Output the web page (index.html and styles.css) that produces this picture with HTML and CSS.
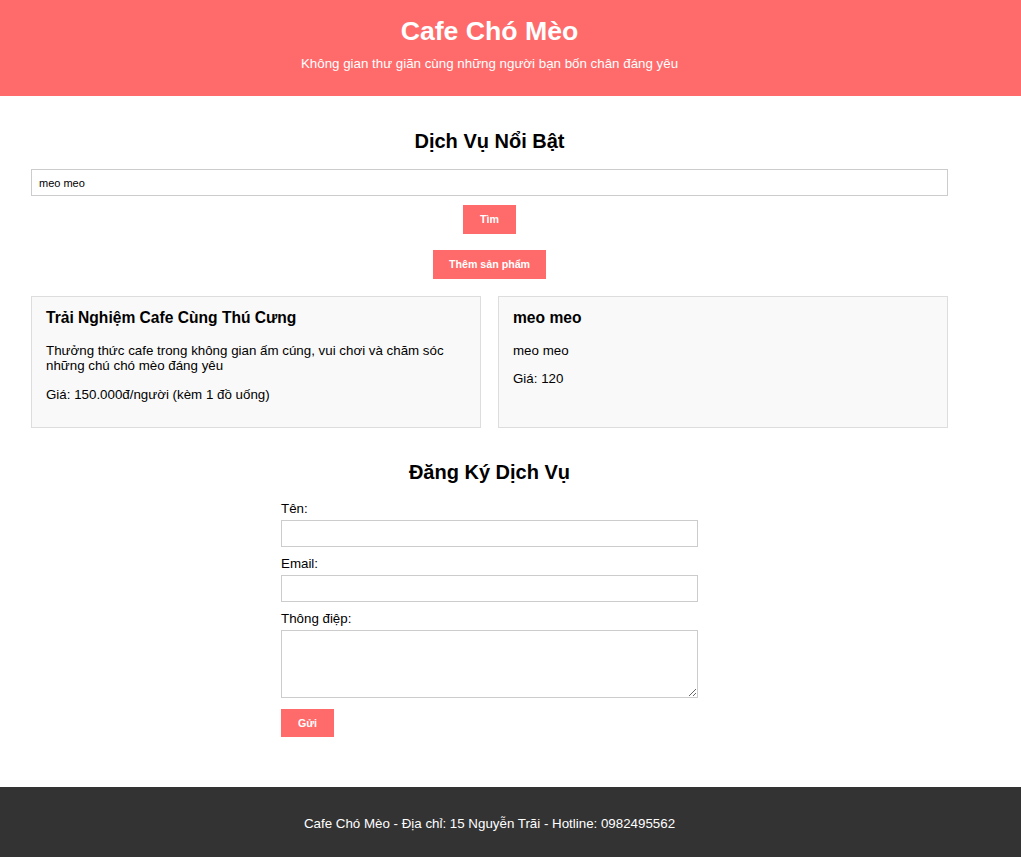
FILE: index.html
```html
<!DOCTYPE html>
<html lang="vi">
<head>
<meta charset="utf-8">
<title>Cafe Chó Mèo</title>
<link rel="stylesheet" href="styles.css">
</head>
<body>
<header class="site-header">
  <h1 class="site-title">Cafe Chó Mèo</h1>
  <p class="site-tagline">Không gian thư giãn cùng những người bạn bốn chân đáng yêu</p>
</header>
<main class="content">
  <section class="services">
    <h2 class="section-title">Dịch Vụ Nổi Bật</h2>
    <div class="search">
      <input class="search-input" type="text" value="meo meo">
      <button class="btn" type="button">Tìm</button>
      <button class="btn btn-add" type="button">Thêm sản phẩm</button>
    </div>
    <div class="cards">
      <div class="card">
        <h3 class="card-title">Trải Nghiệm Cafe Cùng Thú Cưng</h3>
        <p class="card-text">Thưởng thức cafe trong không gian ấm cúng, vui chơi và chăm sóc những chú chó mèo đáng yêu</p>
        <p class="card-text">Giá: 150.000đ/người (kèm 1 đồ uống)</p>
      </div>
      <div class="card">
        <h3 class="card-title">meo meo</h3>
        <p class="card-text">meo meo</p>
        <p class="card-text">Giá: 120</p>
      </div>
    </div>
  </section>
  <section class="register">
    <h2 class="section-title section-title-reg">Đăng Ký Dịch Vụ</h2>
    <form class="reg-form">
      <label class="field-label" for="name">Tên:</label>
      <input class="field-input" id="name" type="text">
      <label class="field-label" for="email">Email:</label>
      <input class="field-input" id="email" type="email">
      <label class="field-label" for="msg">Thông điệp:</label>
      <textarea class="field-area" id="msg"></textarea>
      <button class="btn btn-send" type="button">Gửi</button>
    </form>
  </section>
</main>
<footer class="site-footer">
  <p class="footer-text">Cafe Chó Mèo - Địa chỉ: 15 Nguyễn Trãi - Hotline: 0982495562</p>
</footer>
</body>
</html>
```
FILE: styles.css
```css
* { box-sizing: border-box; }
body {
  margin: 0;
  font-family: "Liberation Sans", Arial, sans-serif;
  font-size: 13.33px;
  color: #000;
  background: #fff;
}
.site-header {
  background: #ff6b6b;
  color: #fff;
  text-align: center;
  padding: 16px 42px 13px 0;
}
.site-title {
  margin: 0;
  font-size: 26.67px;
  line-height: 31px;
  font-weight: bold;
}
.site-tagline {
  margin: 9px 0 12px;
  font-size: 13.33px;
  line-height: 15px;
}
.content {
  width: 917px;
  margin-left: 31px;
  padding-bottom: 50px;
}
.services { padding-top: 34px; }
.section-title {
  margin: 0 0 16px;
  font-size: 20px;
  line-height: 23px;
  text-align: center;
  font-weight: bold;
}
.search {
  display: flex;
  flex-direction: column;
  align-items: center;
}
.search-input {
  width: 100%;
  height: 27px;
  border: 1px solid #ccc;
  padding: 0 7px;
  font-family: "Liberation Sans", Arial, sans-serif;
  font-size: 11px;
  color: #000;
  margin: 0 0 9px;
}
.btn {
  background: #ff6b6b;
  color: #fff;
  border: 0;
  font-family: "Liberation Sans", Arial, sans-serif;
  font-size: 10.67px;
  font-weight: bold;
  line-height: 13px;
  padding: 8px 17px;
  margin: 0;
  cursor: pointer;
}
.btn-add { margin-top: 16px; padding: 8px 16px; }
.cards {
  display: grid;
  grid-template-columns: 1fr 1fr;
  gap: 17px;
  margin-top: 17px;
}
.card {
  background: #f9f9f9;
  border: 1px solid #ddd;
  padding: 12px 14px 12px;
}
.card-title {
  margin: 0 0 16px;
  font-size: 15.6px;
  line-height: 18px;
  font-weight: bold;
}
.card-text {
  margin: 0 0 13px;
  line-height: 15.3px;
}
.register { padding-top: 33px; }
.section-title-reg { margin-bottom: 17px; }
.reg-form {
  width: 417px;
  margin: 0 auto;
  display: flex;
  flex-direction: column;
  align-items: flex-start;
}
.field-label {
  display: block;
  line-height: 15px;
  margin-bottom: 4px;
}
.field-input {
  display: block;
  width: 100%;
  height: 27px;
  border: 1px solid #ccc;
  padding: 0 7px;
  font-family: "Liberation Sans", Arial, sans-serif;
  font-size: 11px;
  margin: 0 0 9px;
}
.field-area {
  display: block;
  width: 100%;
  height: 68px;
  border: 1px solid #ccc;
  padding: 6px 7px;
  font-family: "Liberation Sans", Arial, sans-serif;
  font-size: 11px;
  margin: 0 0 11px;
}
.btn-send { padding: 8px 17px 7px; }
.site-footer {
  background: #333;
  color: #fff;
  text-align: center;
  padding: 29px 42px 26px 0;
}
.footer-text {
  margin: 0;
  line-height: 15px;
}
```
